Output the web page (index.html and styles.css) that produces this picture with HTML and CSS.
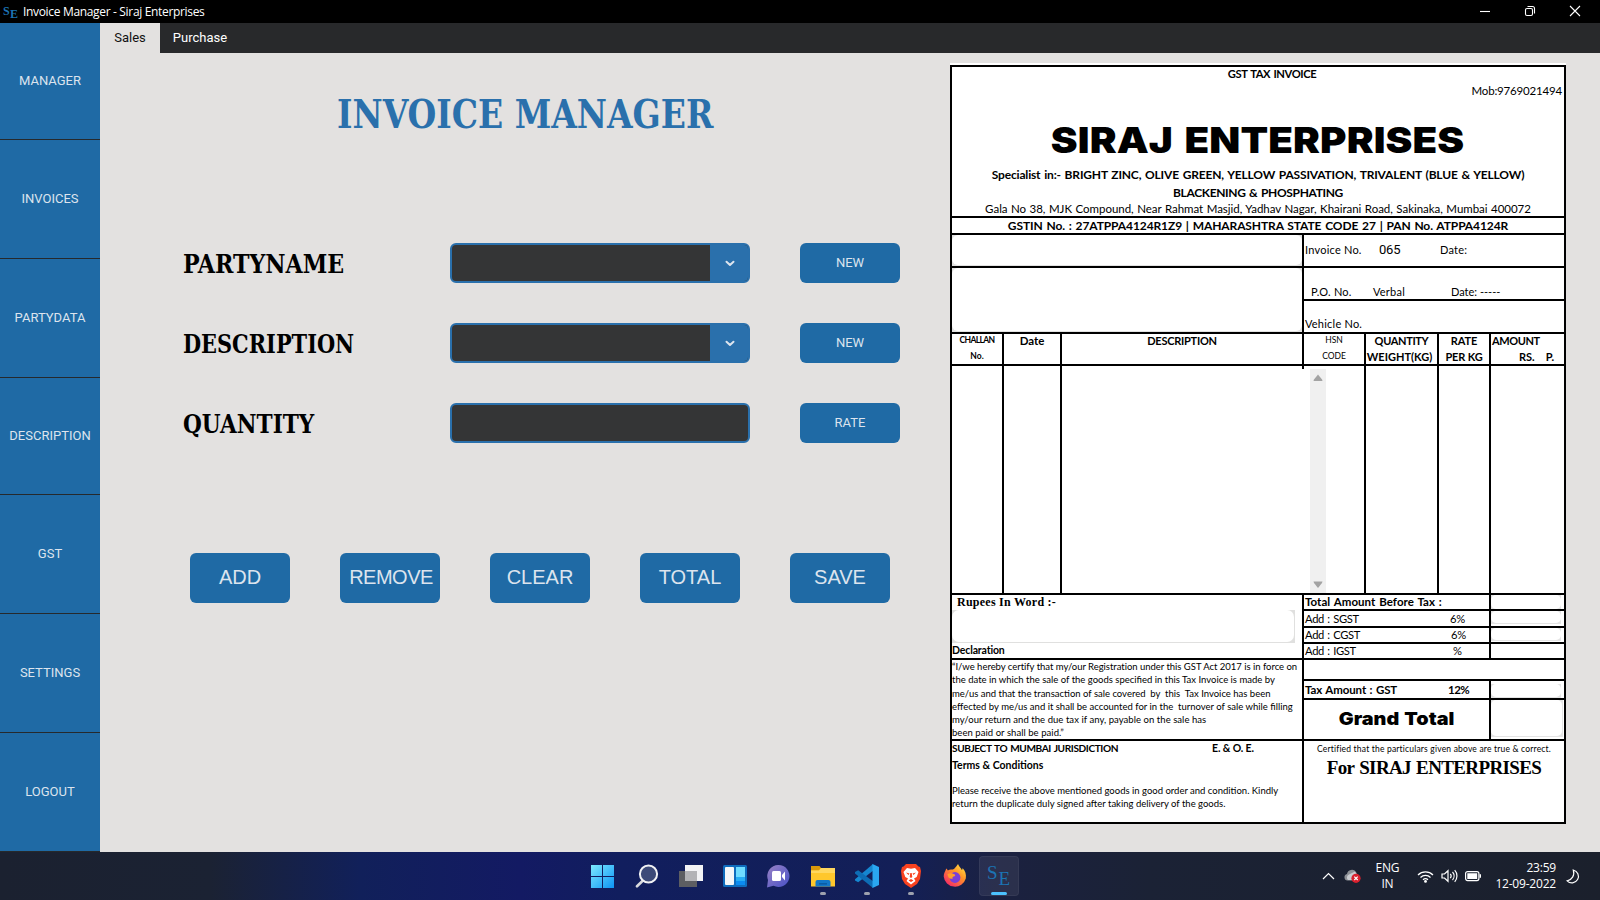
FILE: index.html
```html
<!DOCTYPE html>
<html lang="en">
<head>
<meta charset="utf-8">
<title>Invoice Manager - Siraj Enterprises</title>
<link rel="stylesheet" href="styles.css">
</head>
<body>
<div class="screen">
  <header class="titlebar">
    <svg class="app-icon" width="16" height="14" viewBox="0 0 16 14"><text x="0" y="9.5" class="se se-small">S</text><text x="7" y="12.5" class="se se-small">E</text></svg>
    <span class="window-title">Invoice Manager - Siraj Enterprises</span>
    <div class="window-controls">
      <svg width="12" height="12" viewBox="0 0 12 12"><path d="M1 6.5h10" /></svg>
      <svg width="12" height="12" viewBox="0 0 12 12"><rect x="1.5" y="3.5" width="7" height="7" rx="1.5"/><path d="M3.5 1.5h5a2 2 0 0 1 2 2v5"/></svg>
      <svg width="12" height="12" viewBox="0 0 12 12"><path d="M1 1l10 10M11 1L1 11"/></svg>
    </div>
  </header>

  <div class="workspace">
    <nav class="sidebar">
      <a class="nav-item short">MANAGER</a>
      <a class="nav-item">INVOICES</a>
      <a class="nav-item">PARTYDATA</a>
      <a class="nav-item short">DESCRIPTION</a>
      <a class="nav-item">GST</a>
      <a class="nav-item">SETTINGS</a>
      <a class="nav-item">LOGOUT</a>
    </nav>
    <div class="content">
      <div class="tabs"><span class="tab active">Sales</span><span class="tab">Purchase</span></div>
      <div class="page">
        <section class="form">
          <h1 class="heading"><span>INVOICE MANAGER</span></h1>
          <div class="fields">
            <label class="label"><span class="lb-party">PARTYNAME</span></label>
            <div class="combo"><div class="combo-text"></div><div class="combo-arrow"><svg width="10" height="7" viewBox="0 0 10 7"><path d="M1.500 1.700L5 5l3.500-3.300"/></svg></div></div>
            <button class="btn">NEW</button>
            <label class="label"><span class="lb-desc">DESCRIPTION</span></label>
            <div class="combo"><div class="combo-text"></div><div class="combo-arrow"><svg width="10" height="7" viewBox="0 0 10 7"><path d="M1.500 1.700L5 5l3.500-3.300"/></svg></div></div>
            <button class="btn">NEW</button>
            <label class="label"><span class="lb-qty">QUANTITY</span></label>
            <div class="combo entry"></div>
            <button class="btn">RATE</button>
          </div>
          <div class="actions">
            <button class="btn big">ADD</button>
            <button class="btn big remove">REMOVE</button>
            <button class="btn big">CLEAR</button>
            <button class="btn big">TOTAL</button>
            <button class="btn big">SAVE</button>
          </div>
        </section>

        <section class="paper">
          <div class="invoice">
            <div class="cell head">
              <div class="gst-title">GST TAX INVOICE</div>
              <div class="mob">Mob:9769021494</div>
              <div class="company"><span>SIRAJ ENTERPRISES</span></div>
              <div class="special">Specialist in:- BRIGHT ZINC, OLIVE GREEN, YELLOW PASSIVATION, TRIVALENT (BLUE &amp; YELLOW)</div>
              <div class="special second">BLACKENING &amp; PHOSPHATING</div>
              <div class="address">Gala No 38, MJK Compound, Near Rahmat Masjid, Yadhav Nagar, Khairani Road, Sakinaka, Mumbai 400072</div>
            </div>
            <div class="cell gstin">GSTIN No. : 27ATPPA4124R1Z9 | MAHARASHTRA STATE CODE 27 | PAN No. ATPPA4124R</div>

            <div class="meta">
              <div class="stack party">
                <div class="box"><div class="box-in"></div></div>
                <div class="box"><div class="box-in"></div></div>
              </div>
              <div class="stack refs">
                <div class="cell ref inv"><span>Invoice No.</span><span class="num">065</span><span>Date:</span></div>
                <div class="cell ref po"><span>P.O. No.</span><span>Verbal</span><span class="dashes">Date: -----</span></div>
                <div class="cell ref veh"><span>Vehicle No.</span></div>
              </div>
            </div>

            <div class="items th">
              <div class="cell tiny-b"><div class="challan">CHALLAN</div><div>No.</div></div>
              <div class="cell th-date">Date</div>
              <div class="cell th-desc">DESCRIPTION</div>
              <div class="cell tiny"><div>HSN</div><div>CODE</div></div>
              <div class="cell"><div class="th-qty">QUANTITY</div><div class="th-kg">WEIGHT(KG)</div></div>
              <div class="cell th-rate"><div>RATE</div><div>PER KG</div></div>
              <div class="cell th-amt"><div class="amt">AMOUNT</div><div class="rsp"><span>RS.</span><span>P.</span></div></div>
            </div>
            <div class="items tb">
              <div class="cell"></div>
              <div class="cell"></div>
              <div class="cell wide"><div class="stub"></div>
                <div class="scroll">
                  <svg width="16" height="18" viewBox="0 0 16 18"><path d="M3.500 12L4 10.500 8 5.500l4 5 .5 1.500z"/></svg>
                  <svg width="16" height="18" viewBox="0 0 16 18"><path d="M3.500 6.500L4 8l4 5 4-5 .5-1.500z"/></svg>
                </div>
              </div>
              <div class="cell"></div>
              <div class="cell"></div>
              <div class="cell"></div>
            </div>

            <div class="foot">
              <div class="stack foot-left">
                <div class="cell words">
                  <div class="rupees">Rupees In Word :-</div>
                  <div class="words-box"><div></div></div>
                  <div class="bold-s decl">Declaration</div>
                </div>
                <div class="cell cert">
                  <div class="c1">“I/we hereby certify that my/our Registration under this GST Act 2017 is in force on</div>
                  <div class="c2">the date in which the sale of the goods specified in this Tax Invoice is made by</div>
                  <div class="c3">me/us and that the transaction of sale covered  by  this  Tax Invoice has been</div>
                  <div class="c4">effected by me/us and it shall be accounted for in the  turnover of sale while filling</div>
                  <div class="c5">my/our return and the due tax if any, payable on the sale has</div>
                  <div class="c6">been paid or shall be paid.”</div>
                </div>
                <div class="cell terms">
                  <div class="bold-s juris"><span class="subj">SUBJECT TO MUMBAI JURISDICTION</span><span>E. &amp; O. E.</span></div>
                  <div class="bold-s tc">Terms &amp; Conditions</div>
                  <div class="note first">Please receive the above mentioned goods in good order and condition. Kindly</div>
                  <div class="note">return the duplicate duly signed after taking delivery of the goods.</div>
                </div>
              </div>
              <div class="stack foot-right">
                <div class="sum"><div class="cell tot">Total Amount Before Tax :</div><div class="cell"><div class="fld"><i></i></div></div></div>
                <div class="sum"><div class="cell tax"><span>Add : SGST</span><span>6%</span></div><div class="cell"><div class="fld ln"><i></i></div></div></div>
                <div class="sum"><div class="cell tax cg"><span>Add : CGST</span><span>6%</span></div><div class="cell"><div class="fld ln"><i></i></div></div></div>
                <div class="sum"><div class="cell tax ig"><span>Add : IGST</span><span>%</span></div><div class="cell"></div></div>
                <div class="cell"></div>
                <div class="sum"><div class="cell tax gst"><span>Tax Amount : GST</span><span>12%</span></div><div class="cell pad"><div class="fld ln"><i></i></div></div></div>
                <div class="sum"><div class="cell grand"><span>Grand Total</span></div><div class="cell"><div class="fld gt"><i></i></div></div></div>
                <div class="cell sign"><div class="certified">Certified that the particulars given above are true &amp; correct.</div><div class="forse">For SIRAJ ENTERPRISES</div></div>
              </div>
            </div>
          </div>
        </section>
      </div>
    </div>
  </div>

  <footer class="taskbar">
    <div class="apps">
      <div class="app"><svg width="24" height="24" viewBox="0 0 24 24"><defs><linearGradient id="w" x1="0" y1="0" x2="1" y2="1"><stop offset="0" stop-color="#7deaff"/><stop offset="1" stop-color="#0d94f5"/></linearGradient></defs><path fill="url(#w)" d="M0 1h11v11H0zM12 1h11v11H12zM0 13h11v11H0zM12 13h11v11H12z"/></svg></div>
      <div class="app"><svg width="24" height="24" viewBox="0 0 24 24"><path d="M8 16.500L2 22.300" stroke="#d8dade" stroke-width="2.600" stroke-linecap="round"/><circle cx="13.500" cy="10" r="8.600" fill="#3c4a78" stroke="#f1f2f4" stroke-width="2"/></svg></div>
      <div class="app"><svg width="24" height="24" viewBox="0 0 24 24"><path fill="#f3f3f5" d="M6 1h18v16H6z"/><path fill="#5d5e62" d="M0 7h18v16H0z"/><path fill="#b3b3b6" d="M6 7h12v10H6z"/></svg></div>
      <div class="app"><svg width="24" height="24" viewBox="0 0 24 24"><rect y="1" width="24" height="22" rx="1.500" fill="#0f6cbd"/><rect x="2" y="3" width="9" height="18" rx="1" fill="#f4f6f8"/><rect x="13" y="3" width="9" height="10" fill="#6fdcff"/><rect x="13" y="13" width="9" height="4" fill="#27aef5"/><rect x="13" y="17" width="9" height="4" fill="#0c8bf0"/></svg></div>
      <div class="app"><svg width="24" height="24" viewBox="0 0 24 24"><defs><linearGradient id="t" x1="0" y1="0" x2="1" y2="1"><stop offset="0" stop-color="#9a83c4"/><stop offset="1" stop-color="#4650c8"/></linearGradient></defs><path fill="url(#t)" d="M11.500 1a11 11 0 1 1-5 20.800L0 23.500 1 16A11 11 0 0 1 11.500 1z"/><rect x="5" y="7" width="9" height="10" rx="1.500" fill="#fff"/><path fill="#fff" d="M15 11l3-3.500v9L15 13z"/></svg></div>
      <div class="app"><svg width="24" height="24" viewBox="0 0 24 24"><path fill="#d9980a" d="M0 2h8.500l2 2.500V8H0z"/><path fill="#ffc72c" d="M0 6.500h8L10 4h14v18.500H0z"/><path fill="#ffd75e" d="M0 6.500h8L10 4h14v5H0z"/><path fill="#1277c9" d="M4.500 22.500V18a2 2 0 0 1 2-2h11a2 2 0 0 1 2 2v4.500z"/><path fill="#0a5da6" d="M8 19h8v1.600H8z"/></svg><b></b></div>
      <div class="app"><svg width="24" height="24" viewBox="0 0 24 24"><path fill="#1587d0" d="M18 0v6.800L3.200 18.300 0 16.500v-1.300z"/><path fill="#0d6db5" d="M3.200 6.200L18 17.200V24L0 9.500V8z"/><path fill="#2aa7f0" d="M17.500 0L24 3v18l-6.500 3z"/></svg><b></b></div>
      <div class="app"><svg width="24" height="24" viewBox="0 0 24 24"><path fill="#f9421f" d="M7 0h10l2.500 2.500L21 3l1 4-1 8-3 5-6 4-6-4-3-5L2 7l1-4 1.500-.5z"/><path fill="#fff" d="M8 4l4 .8L16 4l3.500 4-1.800 5-2.700 1.500L16.500 17 12 20.500 7.500 17 9 14.500 6.300 13 4.500 8z"/><path fill="#f9421f" d="M7 8.500l3.500 1-1 1.500zM17 8.500l-3.500 1 1 1.500zM11.300 9h1.400l.6 4-1.300 1-1.300-1zM9.500 16.500L12 15l2.500 1.500L12 18z"/></svg><b></b></div>
      <div class="app"><svg width="24" height="24" viewBox="0 0 24 24"><defs><linearGradient id="f" x1="1" y1="0" x2=".2" y2="1"><stop offset="0" stop-color="#fff04a"/><stop offset=".45" stop-color="#ff9326"/><stop offset="1" stop-color="#f5246b"/></linearGradient></defs><path fill="url(#f)" d="M15 0c1 3 3 3.500 3.800 6 .9-.5.800-1.500.7-2 2.800 3 4 6 3.300 10.500A11.300 11.300 0 0 1 .7 12.500C.600 9 2.500 7.500 3.200 4.500c1 .7 1.300 1.200 1.600 2C7 5 9 6 11 5c1.500-1.500 2.500-3 4-5z"/><circle cx="12" cy="13.500" r="5.400" fill="#7a3fd6"/><path fill="#ff9d2b" d="M4.500 10c3-1.500 5-.6 7 .3 1.500.8.500 2-.8 2.200-1.200.2-1.500 1.300-1 2.200C6.500 15.500 4.600 13 4.500 10z"/></svg></div>
      <div class="app current"><svg width="24" height="24" viewBox="0 0 24 24"><text x="0" y="15" class="se se-big">S</text><text x="11.500" y="20.500" class="se se-big">E</text></svg><b></b></div>
    </div>
    <div class="tray">
      <svg class="chev" width="13" height="8" viewBox="0 0 13 8"><path d="M1 7l5.500-5.500L12 7"/></svg>
      <svg class="cloud" width="17" height="14" viewBox="0 0 17 14"><path fill="#8d9096" d="M3.500 11.500A3.300 3.300 0 0 1 3 5 5 5 0 0 1 12 3l1.500 3v5.500z"/><path fill="#c9cbd0" d="M4 11a3.300 3.300 0 0 1 1-5.500L11 2.500l2 3.500v5z"/><circle cx="12" cy="9.300" r="4.600" fill="#d9202e"/><path stroke="#fff" stroke-width="1.200" d="M10.300 7.600l3.400 3.400M13.700 7.600l-3.400 3.400"/></svg>
      <div class="lang"><div>ENG</div><div>IN</div></div>
      <svg class="wifi" width="17" height="13" viewBox="0 0 17 13"><path d="M1 5a10.500 10.500 0 0 1 15 0M3.500 7.500a7 7 0 0 1 10 0M6 9.800a3.600 3.600 0 0 1 5 0"/><circle cx="8.500" cy="11.400" r="1.400" class="dot"/></svg>
      <svg class="vol" width="17" height="14" viewBox="0 0 17 14"><path d="M1 5h2.500L7 1.700v10.600L3.500 9H1zM9.300 4.800a3.500 3.500 0 0 1 0 4.400M11.500 3a6 6 0 0 1 0 8M13.700 1.200a8.600 8.600 0 0 1 0 11.600"/></svg>
      <svg class="bat" width="17" height="12" viewBox="0 0 17 12"><rect x=".6" y="1.600" width="13.300" height="9" rx="2"/><path class="dot" d="M2.300 3.300h9.900v5.600H2.300zM14.500 4.300h1.500v3.500h-1.500z"/></svg>
      <div class="clock"><div>23:59</div><div class="date">12-09-2022</div></div>
      <svg class="moon" width="14" height="15" viewBox="0 0 14 15"><path d="M7.300 1A6.500 6.500 0 1 1 1.200 11.800C5.800 11 9 6.500 7.300 1z"/></svg>
    </div>
  </footer>
</div>
</body>
</html>
```
FILE: styles.css
```css
* { box-sizing: border-box; }
body { margin: 0; background: #e3e1e0; overflow: hidden; }
.screen { width: 1600px; height: 900px; display: flex; flex-direction: column; }

/* window frame */
.titlebar { height: 23px; background: #000; display: flex; align-items: center; padding-left: 2px; color: #fff; font: 12px/23px "Open Sans", sans-serif; }
.app-icon { margin: 0 4px 0 1px; }
.se { font-family: "Liberation Serif", serif; fill: #1c74b4; }
.se-small { font-size: 12px; font-weight: bold; }
.se-big { font-size: 19px; }
.window-title { letter-spacing: -.33px; }
.window-controls { margin-left: auto; display: flex; gap: 33px; padding: 0 19px 2px 0; }
.window-controls svg { display: block; fill: none; stroke: #fff; stroke-width: 1.1; }

.workspace { height: 829px; display: flex; }
.sidebar { width: 100px; }
.nav-item { display: flex; align-items: center; justify-content: center; height: 119px; padding-bottom: 2px; background: #1f6aa5; border-bottom: 1px solid #26292c; color: #dce4ee; font: 13px Roboto, sans-serif; }
.nav-item.short { height: 117px; }
.content { width: 1500px; }
.tabs { height: 30px; background: #28292b; display: flex; font: 13px/30px Roboto, sans-serif; color: #fff; }
.tab { width: 80px; text-align: center; }
.tab.active { width: 60px; background: #e3e1e0; color: #111; }
.page { display: flex; height: 799px; }

/* entry form */
.form { width: 850px; }
.heading { margin: 37px 0 105px; text-align: center; font: bold 40px/48px "DejaVu Serif Condensed", "DejaVu Serif", serif; font-stretch: condensed; color: #2a70ac; }
.heading span { display: inline-block; transform: scaleX(.917); margin: 0 -30px; }
.fields { display: grid; grid-template-columns: 217px 300px 100px; grid-auto-rows: 40px; gap: 40px 50px; padding-left: 83px; }
.label { padding-top: 1px; font: bold 26px/40px "DejaVu Serif Condensed", "DejaVu Serif", serif; font-stretch: condensed; color: #000; white-space: nowrap; }
.label span { display: inline-block; transform-origin: left; }
.lb-party { transform: scaleX(.947); }
.lb-desc { transform: scaleX(.893); }
.lb-qty { transform: scaleX(.925); }
.combo { display: flex; border: 2px solid #2a70ac; border-radius: 6px; background: #343536; overflow: hidden; }
.combo-text { width: 258px; }
.combo-arrow { flex: 1; background: #2a70ac; display: flex; align-items: center; justify-content: center; padding: 1px 0 0 2px; }
.combo-arrow svg { fill: none; stroke: #dce4ee; stroke-width: 2; stroke-linecap: round; stroke-linejoin: round; }
.btn { border: 0; border-radius: 6px; padding: 0 0 2px; background: #1f6aa5; color: #dce4ee; font: 13px Roboto, sans-serif; }
.actions { display: flex; gap: 50px; padding-left: 90px; margin-top: 110px; }
.btn.big { width: 100px; height: 50px; font: 20px "Liberation Sans", sans-serif; }
.btn.remove { letter-spacing: -.5px; padding-left: 2px; }

/* printed invoice */
.paper { width: 616px; height: 761px; margin-top: 10px; background: #fff; padding-top: 2px; }
.invoice { width: 616px; height: 759px; border: 2px solid #000; background: #000; display: flex; flex-direction: column; gap: 2px; font: 11.5px Lato, sans-serif; color: #000; white-space: nowrap; }
.cell { background: #fff; min-width: 0; }
.stack { display: grid; gap: 2px; background: #000; }
.head { height: 149px; text-align: center; display: flex; flex-direction: column; }
.gst-title { font-size: 11.2px; font-weight: bold; line-height: 14px; padding-left: 28px; letter-spacing: -.4px; word-spacing: 1px; }
.mob { margin-top: 2px; line-height: 16px; text-align: right; padding-right: 2px; letter-spacing: -.18px; }
.company { margin-top: 21px; height: 40px; font: 900 36px/40px Inter, sans-serif; }
.company span { display: inline-block; transform: scaleX(1.12); letter-spacing: .1px; word-spacing: 3px; }
.special { margin-top: 6px; font-size: 12px; font-weight: bold; line-height: 18px; letter-spacing: -.17px; word-spacing: 1px; }
.special.second { margin-top: 0; line-height: 17px; letter-spacing: -.35px; }
.address { line-height: 15px; letter-spacing: -.03px; word-spacing: .6px; }
.gstin { height: 15px; text-align: center; font-size: 12px; font-weight: bold; line-height: 15px; letter-spacing: -.1px; word-spacing: 1px; }

.meta { display: grid; grid-template-columns: 350px 260px; gap: 2px; height: 97px; }
.party { grid-template-rows: 31px 64px; }
.refs { grid-template-rows: 31px 31px 31px; }
.box { background: #e2e2e1; padding: 0 0 1px; }
.box-in { height: 100%; background: #fff; border-radius: 6px; }
.ref { display: grid; font-size: 11px; line-height: 14px; letter-spacing: .22px; }
.inv { grid-template-columns: 74px 61px 1fr; padding: 8px 0 0 1px; }
.num { font: 13px/14px Roboto, sans-serif; letter-spacing: -.2px; }
.po { grid-template-columns: 62px 78px 1fr; padding: 17px 0 0 7px; }
.dashes { letter-spacing: 0; }
.veh { padding: 16px 0 0 1px; }

.items { display: grid; grid-template-columns: 50px 56px 240px 60px 71px 50px 73px; gap: 2px; text-align: center; }
.th { height: 30px; font-size: 11px; font-weight: bold; line-height: 12px; }
.th .cell { padding-top: 1px; }
.th div + div:not(.cell) { margin-top: 4px; }
.th .tiny, .th .tiny-b { font-size: 8.5px; padding-top: 0; }
.tiny { font-weight: normal; }
.challan { letter-spacing: -.6px; }
.th-date { font-size: 11.5px; }
.th-desc { letter-spacing: -.25px; }
.th-qty { letter-spacing: -.35px; }
.th-kg { padding-right: 4px; }
.th-rate { letter-spacing: -.15px; }
.th-amt { text-align: left; padding-left: 1px; }
.amt { letter-spacing: -.4px; }
.rsp { display: flex; gap: 11px; padding-left: 27px; }
.tb { height: 227px; }
.wide { grid-column: span 2; display: flex; }
.stub { width: 2px; height: 3px; margin-left: 240px; background: #000; }
.scroll { width: 16px; margin: 3px 0 0 6px; background: #f0f0f0; display: flex; flex-direction: column; justify-content: space-between; }
.scroll svg { display: block; fill: #a3a3a3; }

.foot { display: grid; grid-template-columns: 350px 260px; gap: 2px; height: 227px; }
.foot-left { grid-template-rows: 63px 79px 81px; }
.rupees { font: bold 12px/15px "Liberation Serif", serif; letter-spacing: .25px; padding-left: 5px; }
.words-box { width: 343px; height: 33px; background: #e0e0df; padding: 0 1px 1px 0; }
.words-box div { height: 32px; background: #fff; border-radius: 7px; }
.bold-s { font-size: 10.5px; font-weight: bold; line-height: 14px; }
.decl { line-height: 15px; letter-spacing: -.14px; }
.cert { font-size: 9.5px; line-height: 13.3px; }
.c1 { letter-spacing: -.025px; }
.c3, .c4 { white-space: pre; }
.c5, .c6 { letter-spacing: .05px; }
.juris { display: grid; grid-template-columns: 260px 1fr; letter-spacing: -.12px; }
.subj { font-size: 10.1px; letter-spacing: -.4px; word-spacing: 1px; }
.tc { margin-top: 3px; }
.note { font-size: 9.5px; line-height: 13px; }
.note.first { margin-top: 12px; }

.foot-right { grid-template-rows: 14px 15px 14px 14px 19px 17px 39px 81px; }
.sum { display: grid; grid-template-columns: 185px 73px; gap: 2px; }
.tot { font-weight: bold; line-height: 14px; letter-spacing: .05px; word-spacing: 1px; padding-left: 1px; }
.tax { display: grid; grid-template-columns: 145px 1fr; padding-left: 1px; line-height: 15px; font-size: 11.2px; letter-spacing: -.32px; word-spacing: .8px; }
.cg { grid-template-columns: 146px 1fr; line-height: 14px; }
.ig { grid-template-columns: 148px 1fr; line-height: 14px; }
.gst { grid-template-columns: 143px 1fr; line-height: 17px; font-size: 11.5px; font-weight: bold; letter-spacing: -.1px; }
.gst span + span { letter-spacing: -.5px; }
.fld { width: 70px; height: 14px; background: #e4e4e4; }
.fld i { display: block; height: 100%; background: #fff; border-radius: 5px; }
.fld.ln { height: 13px; padding-bottom: 1px; }
.pad { padding-top: 3px; }
.pad .fld { height: 14px; }
.fld.gt { width: 72px; height: 37px; padding: 0 1px 1px 0; }
.grand { text-align: center; font: 900 18px/37px Inter, sans-serif; }
.grand span { display: inline-block; transform: scaleX(1.1); word-spacing: 1px; }
.sign { text-align: center; }
.certified { margin-top: 1px; font-size: 8.5px; line-height: 14px; letter-spacing: .19px; }
.forse { margin-top: 2px; font: bold 19px/20px "Liberation Serif", serif; letter-spacing: -.62px; word-spacing: 1px; }

/* desktop taskbar */
.taskbar { height: 48px; position: relative; display: flex; justify-content: flex-end; background: linear-gradient(90deg, #1b2130 0, #1b2233 210px, #11205a 360px, #131a63 520px, #111e5e 620px, #131f57 900px, #1b2140 1000px, #1b2235 1150px, #1b202c 1600px); }
.apps { position: absolute; left: 583px; top: 4px; display: flex; gap: 4px; }
.app { width: 40px; height: 40px; display: flex; flex-direction: column; align-items: center; padding-top: 8px; border-radius: 4px; }
.app svg { display: block; fill: none; }
.app b { width: 6px; height: 3px; margin-top: 4px; border-radius: 2px; background: #9ea2ae; }
.app.current { background: rgba(255,255,255,.07); box-shadow: inset 0 0 0 1px rgba(255,255,255,.05); }
.app.current b { width: 16px; background: #4cc2ff; }
.tray { display: flex; align-items: center; color: #fff; font: 12px/16px "Open Sans", sans-serif; padding-right: 20px; }
.tray svg { fill: none; stroke: #fff; stroke-width: 1.2; }
.tray .dot { fill: #fff; stroke: none; }
.cloud path, .cloud circle { stroke-width: 0; }
.cloud path:last-child { stroke-width: 1.2; }
.chev { margin-right: 9px; }
.lang { text-align: center; margin: 0 18px 0 15px; letter-spacing: -.2px; }
.vol { margin: 0 7px; }
.clock { text-align: right; margin: 0 10px 0 13px; letter-spacing: -.2px; }
```
